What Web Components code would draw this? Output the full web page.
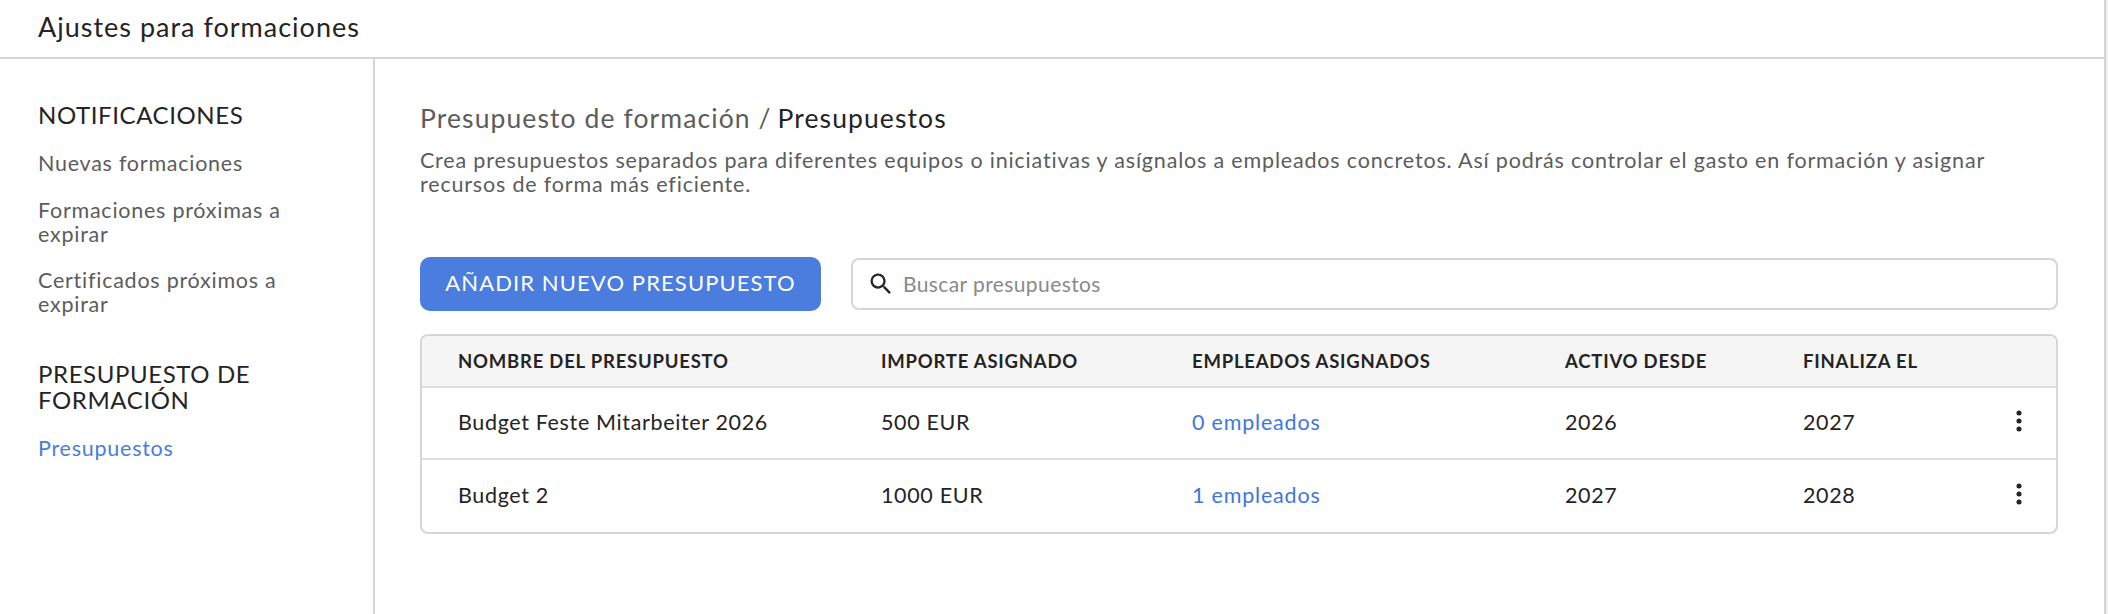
<!DOCTYPE html>
<html lang="es">
<head>
<meta charset="utf-8">
<title>Ajustes para formaciones</title>
<style>
  html, body { margin: 0; padding: 0; background: #efefef; }
  body { font-family: "Lato", "Open Sans", sans-serif; color: #242424; }
</style>
</head>
<body>
<app-shell>
  <span slot="title">Ajustes para formaciones</span>
  <side-nav slot="side">
    <nav-group label="NOTIFICACIONES">
      <nav-link>Nuevas formaciones</nav-link>
      <nav-link>Formaciones próximas a expirar</nav-link>
      <nav-link>Certificados próximos a expirar</nav-link>
    </nav-group>
    <nav-group label="PRESUPUESTO DE FORMACIÓN">
      <nav-link active>Presupuestos</nav-link>
    </nav-group>
  </side-nav>
  <budget-page></budget-page>
</app-shell>

<script>
class AppShell extends HTMLElement {
  constructor() {
    super();
    this.attachShadow({ mode: 'open' });
    this.shadowRoot.innerHTML = `
    <style>
      :host { display: block; width: 2106px; height: 614px; box-sizing: border-box; overflow: hidden; background: #fff; border-right: 2px solid #d6d6d6; }
      header { height: 59px; box-sizing: border-box; border-bottom: 2px solid #d6d6d6; padding: 0 0 4px 38px; display: flex; align-items: center; font-size: 27px; letter-spacing: 1px; color: #242424; }
      #body { display: flex; height: 555px; }
      #side { width: 373px; flex: none; border-right: 2px solid #d6d6d6; }
      #main { flex: 1; min-width: 0; }
    </style>
    <header><slot name="title"></slot></header>
    <div id="body">
      <div id="side"><slot name="side"></slot></div>
      <div id="main"><slot></slot></div>
    </div>`;
  }
}

class SideNav extends HTMLElement {
  constructor() {
    super();
    this.attachShadow({ mode: 'open' });
    this.shadowRoot.innerHTML = `
    <style>
      :host { display: flex; flex-direction: column; gap: 45px; padding: 43px 50px 0 38px; }
    </style>
    <slot></slot>`;
  }
}

class NavGroup extends HTMLElement {
  constructor() {
    super();
    this.attachShadow({ mode: 'open' });
    this.shadowRoot.innerHTML = `
    <style>
      :host { display: block; }
      h3 { margin: 0 0 23px; font-weight: 400; font-size: 24px; line-height: 26px; letter-spacing: 0.6px; color: #242424; }
      div { display: flex; flex-direction: column; gap: 22.5px; }
    </style>
    <h3></h3>
    <div><slot></slot></div>`;
    this.shadowRoot.querySelector('h3').textContent = this.getAttribute('label');
  }
}

class NavLink extends HTMLElement {
  constructor() {
    super();
    this.attachShadow({ mode: 'open' });
    this.shadowRoot.innerHTML = `
    <style>
      :host { display: block; font-size: 21.5px; line-height: 24px; letter-spacing: 0.75px; color: #5c5c5c; }
      :host([active]) { color: #4a7ddd; }
    </style>
    <slot></slot>`;
  }
}

class SearchBox extends HTMLElement {
  constructor() {
    super();
    this.attachShadow({ mode: 'open' });
    this.shadowRoot.innerHTML = `
    <style>
      :host { display: flex; align-items: center; flex: 1; height: 52px; box-sizing: border-box; border: 2px solid #d6d6d6; border-radius: 8px; padding-left: 14px; gap: 8px; font-size: 21px; letter-spacing: 0.4px; color: #8a8a8a; background: #fff; }
      svg { width: 28px; height: 28px; flex: none; }
      span { margin-top: -2px; }
    </style>
    <svg viewBox="0 0 24 24" fill="#242424"><path d="M15.5 14h-.79l-.28-.27A6.47 6.47 0 0 0 16 9.5 6.5 6.5 0 1 0 9.5 16c1.61 0 3.09-.59 4.23-1.57l.27.28v.79l5 4.99L20.49 19l-4.99-5zm-6 0C7.01 14 5 11.99 5 9.5S7.01 5 9.5 5 14 7.01 14 9.5 11.99 14 9.5 14z"/></svg>
    <span><slot></slot></span>`;
  }
}

class BudgetRow extends HTMLElement {
  constructor() {
    super();
    this.attachShadow({ mode: 'open' });
    this.shadowRoot.innerHTML = `
    <style>
      :host { display: grid; grid-template-columns: 423px 311px 373px 238px 1fr 32px; align-items: center; padding: 0 21px 2px 36px; height: 72px; box-sizing: border-box; font-size: 21.5px; letter-spacing: 0.65px; color: #242424; }
      :host(:not(:last-child)) { border-bottom: 2px solid #e0e0e0; }
      .link { color: #3f76dc; letter-spacing: 0.8px; }
      svg { width: 32px; height: 32px; display: block; margin-top: -2px; }
    </style>
    <span id="name"></span><span id="amount"></span><span id="people" class="link"></span><span id="from"></span><span id="to"></span>
    <svg viewBox="0 0 24 24" fill="#242424"><circle cx="12" cy="6" r="1.9"/><circle cx="12" cy="12" r="1.9"/><circle cx="12" cy="18" r="1.9"/></svg>`;
    for (const k of ['name', 'amount', 'people', 'from', 'to']) {
      this.shadowRoot.getElementById(k).textContent = this.getAttribute(k);
    }
  }
}

class BudgetTable extends HTMLElement {
  constructor() {
    super();
    this.attachShadow({ mode: 'open' });
    this.shadowRoot.innerHTML = `
    <style>
      :host { display: block; border: 2px solid #d6d6d6; border-radius: 8px; overflow: hidden; margin-top: 23px; }
      #head { display: grid; grid-template-columns: 423px 311px 373px 238px 1fr; align-items: center; height: 52px; box-sizing: border-box; padding-left: 36px; background: #f5f5f5; border-bottom: 2px solid #e0e0e0; font-size: 18.5px; font-weight: 700; letter-spacing: 0.78px; color: #242424; }
    </style>
    <div id="head"><span>NOMBRE DEL PRESUPUESTO</span><span>IMPORTE ASIGNADO</span><span>EMPLEADOS ASIGNADOS</span><span>ACTIVO DESDE</span><span>FINALIZA EL</span></div>
    <slot></slot>`;
  }
}

class BudgetPage extends HTMLElement {
  constructor() {
    super();
    this.attachShadow({ mode: 'open' });
    this.shadowRoot.innerHTML = `
    <style>
      :host { display: block; padding: 44px 46px 0 45px; }
      h2 { margin: 0; font-weight: 400; font-size: 26.5px; line-height: 30px; letter-spacing: 1.1px; color: #5c5c5c; }
      h2 b { font-weight: 400; color: #242424; margin-left: -2px; }
      p { margin: 15px 0 0; font-size: 21.5px; line-height: 24px; letter-spacing: 0.82px; color: #5c5c5c; }
      #tools { display: flex; align-items: center; gap: 30px; margin-top: 61px; }
      button { height: 54px; width: 401px; padding: 0 0 4px; border: 0; border-radius: 10px; background: #4a7ddd; color: #fff; font: inherit; font-size: 22px; letter-spacing: 1.1px; }
    </style>
    <h2>Presupuesto de formación / <b>Presupuestos</b></h2>
    <p>Crea presupuestos separados para diferentes equipos o iniciativas y asígnalos a empleados concretos. Así podrás controlar el gasto en formación y asignar recursos de forma más eficiente.</p>
    <div id="tools">
      <button>AÑADIR NUEVO PRESUPUESTO</button>
      <search-box>Buscar presupuestos</search-box>
    </div>
    <budget-table>
      <budget-row name="Budget Feste Mitarbeiter 2026" amount="500 EUR" people="0 empleados" from="2026" to="2027"></budget-row>
      <budget-row name="Budget 2" amount="1000 EUR" people="1 empleados" from="2027" to="2028"></budget-row>
    </budget-table>`;
  }
}

customElements.define('app-shell', AppShell);
customElements.define('side-nav', SideNav);
customElements.define('nav-group', NavGroup);
customElements.define('nav-link', NavLink);
customElements.define('search-box', SearchBox);
customElements.define('budget-row', BudgetRow);
customElements.define('budget-table', BudgetTable);
customElements.define('budget-page', BudgetPage);
</script>
</body>
</html>
